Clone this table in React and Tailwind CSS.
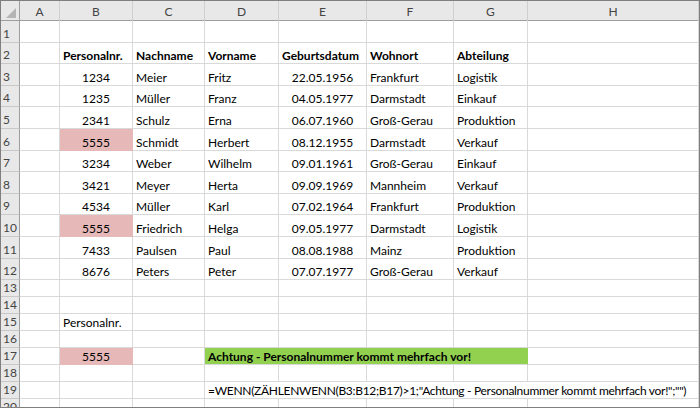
const cols = "grid grid-cols-[19px_40px_73px_72px_74px_88px_87px_74px_1fr]";
const letters = ["A", "B", "C", "D", "E", "F", "G", "H"];

const data = [
  ["1234", "Meier", "Fritz", "22.05.1956", "Frankfurt", "Logistik"],
  ["1235", "Müller", "Franz", "04.05.1977", "Darmstadt", "Einkauf"],
  ["2341", "Schulz", "Erna", "06.07.1960", "Groß-Gerau", "Produktion"],
  ["5555", "Schmidt", "Herbert", "08.12.1955", "Darmstadt", "Verkauf", true],
  ["3234", "Weber", "Wilhelm", "09.01.1961", "Groß-Gerau", "Einkauf"],
  ["3421", "Meyer", "Herta", "09.09.1969", "Mannheim", "Verkauf"],
  ["4534", "Müller", "Karl", "07.02.1964", "Frankfurt", "Produktion"],
  ["5555", "Friedrich", "Helga", "09.05.1977", "Darmstadt", "Logistik", true],
  ["7433", "Paulsen", "Paul", "08.08.1988", "Mainz", "Produktion"],
  ["8676", "Peters", "Peter", "07.07.1977", "Groß-Gerau", "Verkauf"],
];

function Cell({ children, center, bold, className = "" }) {
  return (
    <div
      className={`flex items-end overflow-visible whitespace-nowrap border-r border-b border-[#d9d9d9] leading-[15px] text-[12px] text-black ${
        center ? "justify-center" : "pl-[3px]"
      } ${bold ? "font-bold" : ""} ${className}`}
    >
      {children}
    </div>
  );
}

function RowHead({ n }) {
  return (
    <div className="flex items-end pl-[2px] pb-[1px] border-r border-b border-r-[#9e9e9e] border-b-[#c8c8c8] bg-[#e8e8e8] text-[12px] leading-[15px] text-[#444]">
      {n}
    </div>
  );
}

function Row({ n, h, children }) {
  return (
    <div className={`${cols} ${h}`}>
      <RowHead n={n} />
      {children}
    </div>
  );
}

export default function App() {
  return (
    <div className="w-[700px] h-[408px] overflow-hidden bg-white border border-[#7f7f7f] font-['Lato',sans-serif]">
      {/* column header */}
      <div className={`${cols} h-[20px] bg-[#e8e8e8] border-b border-[#9e9e9e]`}>
        <div className="relative border-r border-[#9e9e9e]">
          <svg className="absolute right-[3px] bottom-[3px]" width="10" height="10" viewBox="0 0 10 10">
            <polygon points="10,0 10,10 0,10" fill="#b4b4b4" />
          </svg>
        </div>
        {letters.map((l) => (
          <div
            key={l}
            className="flex items-center justify-center border-r border-[#cfcfcf] text-[12px] text-[#444] pt-[2px]"
          >
            {l}
          </div>
        ))}
      </div>

      <Row n={1} h="h-[21.6px]">
        {letters.map((l) => (
          <Cell key={l} />
        ))}
      </Row>

      <Row n={2} h="h-[21.6px]">
        <Cell />
        <Cell bold>Personalnr.</Cell>
        <Cell bold>Nachname</Cell>
        <Cell bold>Vorname</Cell>
        <Cell bold>Geburtsdatum</Cell>
        <Cell bold>Wohnort</Cell>
        <Cell bold>Abteilung</Cell>
        <Cell />
      </Row>

      {data.map((r, i) => (
        <Row key={i} n={i + 3} h="h-[21.6px]">
          <Cell />
          <Cell center className={r[6] ? "bg-[#e6b8b7] border-[#e6b8b7]" : ""}>
            {r[0]}
          </Cell>
          <Cell>{r[1]}</Cell>
          <Cell>{r[2]}</Cell>
          <Cell center>{r[3]}</Cell>
          <Cell>{r[4]}</Cell>
          <Cell>{r[5]}</Cell>
          <Cell />
        </Row>
      ))}

      {[13, 14].map((n) => (
        <Row key={n} n={n} h="h-[17px]">
          {letters.map((l) => (
            <Cell key={l} />
          ))}
        </Row>
      ))}

      <Row n={15} h="h-[17px]">
        <Cell />
        <Cell>Personalnr.</Cell>
        {letters.slice(2).map((l) => (
          <Cell key={l} />
        ))}
      </Row>

      <Row n={16} h="h-[17px]">
        {letters.map((l) => (
          <Cell key={l} />
        ))}
      </Row>

      <Row n={17} h="h-[17px]">
        <Cell />
        <Cell center className="bg-[#e6b8b7] border-[#e6b8b7]">
          5555
        </Cell>
        <Cell />
        <Cell bold className="col-span-4 bg-[#92d050] border-r-[#92d050]">
          Achtung - Personalnummer kommt mehrfach vor!
        </Cell>
        <Cell />
      </Row>

      <Row n={18} h="h-[17px]">
        {letters.map((l) => (
          <Cell key={l} />
        ))}
      </Row>

      <Row n={19} h="h-[17px]">
        <Cell />
        <Cell />
        <Cell />
        <Cell className="col-span-5 tracking-[-0.3px]">
          =WENN(ZÄHLENWENN(B3:B12;B17)&gt;1;"Achtung - Personalnummer kommt mehrfach vor!";"")
        </Cell>
      </Row>

      <Row n={20} h="h-[17px]">
        {letters.map((l) => (
          <Cell key={l} />
        ))}
      </Row>
    </div>
  );
}
